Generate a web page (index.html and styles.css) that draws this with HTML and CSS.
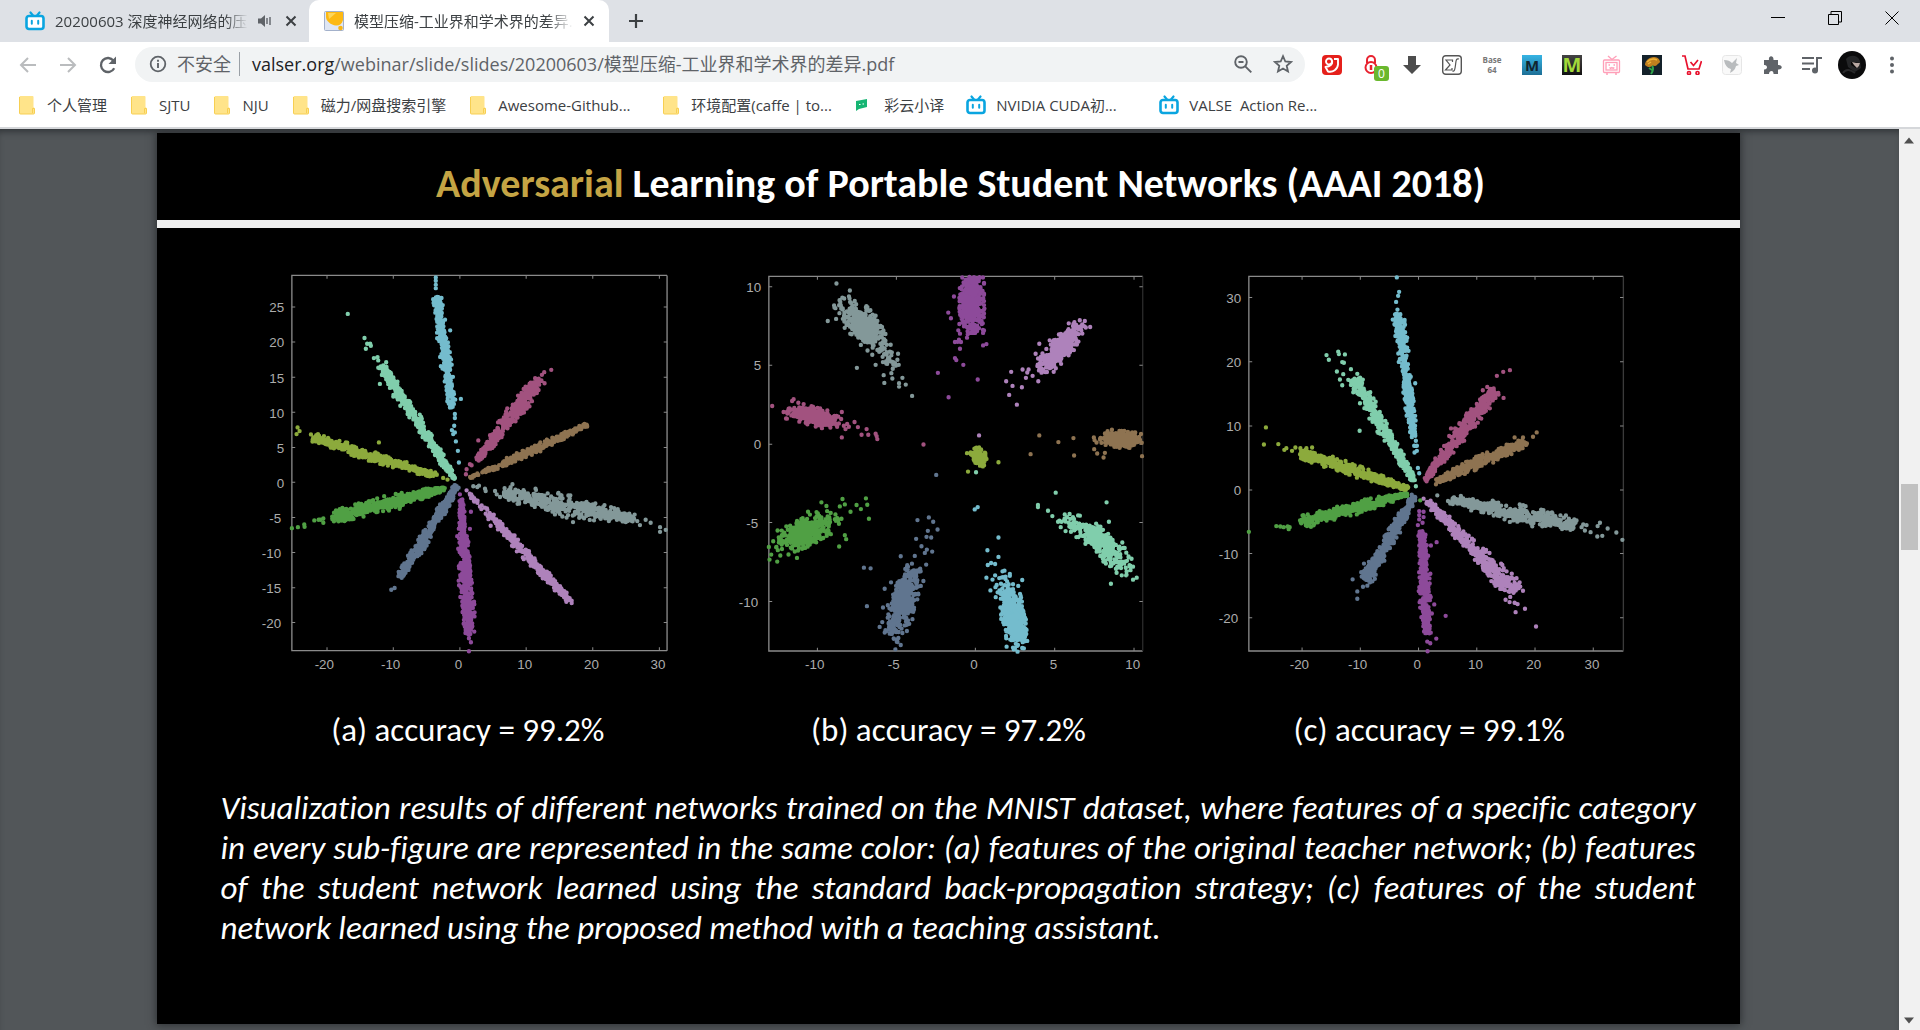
FILE: index.html
```html
<!DOCTYPE html>
<html lang="zh-CN">
<head>
<meta charset="utf-8">
<title>模型压缩-工业界和学术界的差异.pdf</title>
<link rel="stylesheet" href="styles.css">
</head>
<body>
<svg class="sprite" aria-hidden="true">
  <symbol id="tv" viewBox="0 0 20 20"><path d="M5.500 1.500 8 4.500M14.500 1.500 12 4.500" stroke="#0aa5e0" stroke-width="2.200" stroke-linecap="round"/><rect x="1.500" y="5" width="17" height="13" rx="2.500" fill="#fff" stroke="#0aa5e0" stroke-width="2.600"/><path d="M6.800 9.800v3M13.200 9.800v3" stroke="#0aa5e0" stroke-width="2" stroke-linecap="round"/></symbol>
  <symbol id="folder" viewBox="0 0 20 20"><path d="M3.500 1h12a1 1 0 0 1 1 1v10l1 1v5a1 1 0 0 1-1 1h-13a1 1 0 0 1-1-1V2a1 1 0 0 1 1-1z" fill="#ffe48a"/><path d="M2.500 2v16a1 1 0 0 0 1 1h13a1 1 0 0 0 1-1v-4.500h-2V18" fill="none" stroke="#f7cf52" stroke-width="1"/></symbol>
  <symbol id="close" viewBox="0 0 12 12"><path d="m1.500 1.500 9 9m0-9-9 9" stroke="#3c4043" stroke-width="2"/></symbol>
</svg>

<header class="browser">
  <div class="tabstrip">
    <div class="tab">
      <svg class="i20"><use href="#tv"/></svg>
      <span class="tab-title">20200603 深度神经网络的压</span>
      <svg class="sound" viewBox="0 0 14 14"><path d="M0 4.500h3L7 1v12L3 9.500H0z" fill="#5f6368"/><path d="M9 4v6M12 3v8" stroke="#5f6368" stroke-width="1.400"/></svg>
      <button class="tab-close" aria-label="关闭"><svg class="i12"><use href="#close"/></svg></button>
    </div>
    <div class="tab active">
      <svg class="i20" viewBox="0 0 20 20"><rect x=".5" y=".5" width="19" height="19" rx="1" fill="#dfe6f3" stroke="#a3b1cb"/><path d="M2 1h17v8c-1 4-4 6-7 5.500C7 14 2 10 2 6z" fill="#fdb913"/><path d="M4 2h8L5 8z" fill="#fed65a"/><circle cx="16.500" cy="17" r="2.300" fill="#f9b414"/></svg>
      <span class="tab-title">模型压缩-工业界和学术界的差异.</span>
      <button class="tab-close" aria-label="关闭"><svg class="i12"><use href="#close"/></svg></button>
    </div>
    <button class="new-tab" aria-label="新标签页"><svg class="i16" viewBox="0 0 16 16"><path d="M8 1v14M1 8h14" stroke="#3c4043" stroke-width="2.200"/></svg></button>
    <div class="window-buttons">
      <button aria-label="最小化"><svg class="i14" viewBox="0 0 14 14"><path d="M0 6.500h14" stroke="#000"/></svg></button>
      <button aria-label="还原"><svg class="i14" viewBox="0 0 14 14"><path d="M.5 3.500h10v10H.5zM3 3.500v-3h10.500v10.500h-3" fill="none" stroke="#000"/></svg></button>
      <button aria-label="关闭窗口"><svg class="i14" viewBox="0 0 14 14"><path d="m.5.5 13 13m0-13-13 13" stroke="#000"/></svg></button>
    </div>
  </div>

  <div class="toolbar">
    <button aria-label="后退"><svg class="i20" viewBox="0 0 20 20"><path d="M18 10H3m7-7-7 7 7 7" fill="none" stroke="#babcbe" stroke-width="2"/></svg></button>
    <button aria-label="前进"><svg class="i20" viewBox="0 0 20 20"><path d="M2 10h15m-7-7 7 7-7 7" fill="none" stroke="#babcbe" stroke-width="2"/></svg></button>
    <button aria-label="重新加载"><svg class="i20" viewBox="0 0 20 20"><path d="M16.200 13.200A7 7 0 1 1 15.500 5.700" fill="none" stroke="#5f6368" stroke-width="2.300"/><path d="M18 1.500V9h-7.500z" fill="#5f6368"/></svg></button>
    <div class="omnibox">
      <svg class="i18" viewBox="0 0 18 18"><circle cx="9" cy="9" r="7.300" fill="none" stroke="#5f6368" stroke-width="1.800"/><path d="M9 8v5M9 4.800v1.900" stroke="#5f6368" stroke-width="1.900"/></svg>
      <span class="insecure">不安全</span>
      <span class="url"><b>valser.org</b>/webinar/slide/slides/20200603/模型压缩-工业界和学术界的差异.pdf</span>
      <button aria-label="缩放"><svg class="i20" viewBox="0 0 20 20"><circle cx="8" cy="8" r="5.800" fill="none" stroke="#5f6368" stroke-width="1.900"/><path d="M5.500 8h5M12.300 12.300l6 6" stroke="#5f6368" stroke-width="1.900"/></svg></button>
      <button aria-label="收藏"><svg class="i20" viewBox="0 0 20 20"><path d="m10 2.200 2.300 5.300 5.700.5-4.300 3.800 1.300 5.700-5-3-5 3 1.300-5.700L2 8l5.700-.5z" fill="none" stroke="#5f6368" stroke-width="1.800"/></svg></button>
    </div>
    <div class="extensions">
      <button aria-label="扩展 1"><svg class="i20" viewBox="0 0 20 20"><rect width="20" height="20" rx="4" fill="#e5201b"/><g fill="none" stroke="#fff" stroke-width="1.900" stroke-linejoin="round"><circle cx="7" cy="6.500" r="3"/><path d="M10 5.500c1 4-2 6-6.500 6.500L6 16.500c5 1 9.500-2 10-7V4h-4"/></g></svg></button>
      <button class="badged" aria-label="扩展 2"><svg class="i20" viewBox="0 0 20 20"><path d="M5 8V5a4 4 0 0 1 8 0v3" fill="none" stroke="#e8222f" stroke-width="2"/><circle cx="9" cy="12.500" r="5.500" fill="none" stroke="#e8222f" stroke-width="2"/><path d="M9 10v5" stroke="#e8222f" stroke-width="2.500"/></svg><span class="badge">0</span></button>
      <button aria-label="下载"><svg class="i20" viewBox="0 0 20 20"><path d="M6 1h8v9h5l-9 9-9-9h5z" fill="#4d4d4d"/></svg></button>
      <button aria-label="公式"><svg class="i20" viewBox="0 0 20 20"><rect x=".7" y=".7" width="18.600" height="18.600" rx="3" fill="#fff" stroke="#555" stroke-width="1.400"/><path d="M10.500 7V5H4l4 5-4.500 5H10v-2M17 4c-3-1-3 2-3.500 6s-1 7-3 6" fill="none" stroke="#555" stroke-width="1.200"/></svg></button>
      <button class="base64" aria-label="Base64"><span>Base</span><span>64</span></button>
      <button class="tile blue" aria-label="扩展 M">M</button>
      <button class="tile lime" aria-label="扩展 Markdown">M</button>
      <button aria-label="哔哩哔哩"><svg class="i20" viewBox="0 0 20 20" fill="none" stroke="#ff9fb8" stroke-width="1.300"><path d="m6 1 4 3.500L14.500 1"/><rect x="1.500" y="5" width="16" height="12.500" rx="1"/><rect x="4" y="7.500" width="11" height="7.500"/><path d="M6.500 10h1.500M11.500 10H13M7.500 12.500l1.200 1 1.200-1 1.200 1 1.200-1M4 19h2M13 19h2"/></svg></button>
      <button aria-label="扩展 花"><svg class="i20" viewBox="0 0 20 20"><rect width="20" height="20" fill="#14212a"/><path d="M3 10c0-4 4-8 9-8 4 0 6 3 6 5-1 2-2 1-3 3-2 2-4 0-5 1-2 2-5 1-7-1z" fill="#c07f1e"/><path d="M5 7c3-3 6-4 10-2M6 9l3-2" stroke="#efb43a" stroke-width="1.500" fill="none"/><path d="M10 11c2 2 1 5-1 8M7 13l3 2" stroke="#2fa34a" stroke-width="2" fill="none"/></svg></button>
      <button aria-label="购物车"><svg class="i20" viewBox="0 0 20 20" fill="none" stroke="#e8112d" stroke-width="1.700"><path d="M0 1h3l3 13h11l2.500-8"/><path d="m8.500 7 3 3.500L16 5"/><circle cx="7" cy="18" r="1.500"/><circle cx="15.500" cy="18" r="1.500"/></svg></button>
      <button aria-label="扩展 鸟"><svg class="i20" viewBox="0 0 20 20"><rect x=".5" y=".5" width="19" height="19" rx="3" fill="#f9f9f9" stroke="#e6e6e6"/><path d="M2 5c4 0 6 1 8 3l5-5-1 5 3 2-3 1c-1 4-3 5-6 7l1-4c-4-1-6-4-7-9z" fill="#b9bcbe"/></svg></button>
      <button aria-label="扩展程序"><svg class="i20" viewBox="0 0 20 20"><path d="M2 5h5c-1-5 5-5 4.500 0H16v5c5-.5 5 5 0 4.500V19h-4.500c.5-4-4.500-4-4.500 0H2v-4.500c4 .5 4-5 0-4.500z" fill="#5f6368"/></svg></button>
      <button aria-label="媒体"><svg class="i20" viewBox="0 0 20 20"><path d="M0 3h12M0 8.500h12M0 14h8M15 16V3h5" stroke="#5f6368" stroke-width="2" fill="none"/><circle cx="13" cy="15.500" r="3" fill="#5f6368"/></svg></button>
      <button aria-label="个人资料"><svg class="avatar" viewBox="0 0 28 28"><circle cx="14" cy="14" r="14" fill="#0b0b0c"/><path d="M8 8c4-5 12-4 14 2l1 7-6 4-7-5z" fill="#242527"/><path d="m13 11 9 1-1 4-3 1-5-3z" fill="#080808"/><path d="m14 11 4 1 4 0-1 3-2 2-3-3z" fill="#b9a9a3"/><path d="M5 22c3-5 8-3 12 0" stroke="#29292b" stroke-width="2" fill="none"/></svg></button>
      <button aria-label="菜单"><svg class="i20" viewBox="0 0 20 20" fill="#5f6368"><circle cx="10" cy="3.500" r="2"/><circle cx="10" cy="10" r="2"/><circle cx="10" cy="16.500" r="2"/></svg></button>
    </div>
  </div>

  <nav class="bookmarks">
    <a href="#"><svg class="i20"><use href="#folder"/></svg>个人管理</a>
    <a href="#"><svg class="i20"><use href="#folder"/></svg>SJTU</a>
    <a href="#"><svg class="i20"><use href="#folder"/></svg>NJU</a>
    <a href="#"><svg class="i20"><use href="#folder"/></svg>磁力/网盘搜索引擎</a>
    <a href="#" class="long"><svg class="i20"><use href="#folder"/></svg>Awesome-Github...</a>
    <a href="#" class="long"><svg class="i20"><use href="#folder"/></svg>环境配置(caffe | to...</a>
    <a href="#"><svg class="i20" viewBox="0 0 20 20"><path d="m2 6 11-2v8l-8 2-3 2z" fill="#16b573"/><path d="M5 9.500h1.500M8.500 9H10" stroke="#fff" stroke-width="1.200"/></svg>彩云小译</a>
    <a href="#" class="long"><svg class="i20"><use href="#tv"/></svg>NVIDIA CUDA初...</a>
    <a href="#" class="long"><svg class="i20"><use href="#tv"/></svg>VALSE &nbsp;Action Re...</a>
  </nav>
</header>

<div class="viewer">
  <div class="canvas">
    <main class="slide">
      <h1><em>Adversarial</em> Learning of Portable Student Networks (AAAI 2018)</h1>
      <div class="figures">
        <figure><svg class="plot" id="plot-a" viewBox="9 0 1350 1320"></svg><figcaption>(a) accuracy = 99.2%</figcaption></figure>
        <figure><svg class="plot" id="plot-b" viewBox="9 0 1350 1320"></svg><figcaption>(b) accuracy = 97.2%</figcaption></figure>
        <figure><svg class="plot" id="plot-c" viewBox="9 0 1350 1320"></svg><figcaption>(c) accuracy = 99.1%</figcaption></figure>
      </div>
      <p class="note">Visualization results of different networks trained on the MNIST dataset, where features of a specific category in every sub-figure are represented in the same color: (a) features of the original teacher network; (b) features of the student network learned using the standard back-propagation strategy; (c) features of the student network learned using the proposed method with a teaching assistant.</p>
    </main>
  </div>
  <div class="scrollbar">
    <svg class="arrow" viewBox="0 0 20 20"><path d="M5 14.500h10l-5-6z" fill="#505050"/></svg>
    <div class="track"><div class="thumb"></div></div>
    <svg class="arrow" viewBox="0 0 20 20"><path d="M5 7.500h10l-5 6z" fill="#505050"/></svg>
  </div>
</div>
<script src="plots.js"></script>
</body>
</html>
```
FILE: styles.css
```css
* { box-sizing: border-box; }
body {
  margin: 0;
  height: 100vh;
  display: flex;
  flex-direction: column;
  overflow: hidden;
  font: 15px/20px "Open Sans", "Noto Sans CJK SC", sans-serif;
  color: #3c4043;
  background: #fff;
}
button { border: 0; padding: 0; background: none; color: inherit; font: inherit; display: flex; align-items: center; justify-content: center; }
svg { flex: none; display: block; }
.sprite { width: 0; height: 0; position: absolute; }
.i12 { width: 12px; height: 12px; }
.i14 { width: 14px; height: 14px; }
.i16 { width: 16px; height: 16px; }
.i18 { width: 18px; height: 18px; }
.i20 { width: 20px; height: 20px; }

/* tab strip */
.browser { flex: none; border-bottom: 2px solid #d5d7da; }
.tabstrip { height: 42px; display: flex; background: #dee1e6; }
.tab { width: 309px; padding: 0 12px 0 25px; display: flex; align-items: center; gap: 10px; }
.tab.active { width: 300px; padding: 0 14px 0 15px; background: #fff; border-radius: 10px 10px 0 0; }
.tab-title {
  flex: 1;
  overflow: hidden;
  white-space: nowrap;
  -webkit-mask-image: linear-gradient(to right, #000 88%, transparent);
  mask-image: linear-gradient(to right, #000 88%, transparent);
}
.sound { width: 14px; height: 14px; }
.tab-close { width: 12px; margin-left: 3px; }
.active .tab-close { margin-left: 0; }
.new-tab { width: 54px; }
.window-buttons { margin-left: auto; display: flex; padding-bottom: 6px; }
.window-buttons button { width: 57px; }

/* toolbar */
.toolbar { height: 45px; padding: 0 8px; display: flex; align-items: center; }
.toolbar > button { width: 40px; height: 35px; }
.omnibox { flex: 1; height: 35px; margin-left: 7px; padding: 0 12px 2px 14px; display: flex; align-items: center; background: #f1f3f4; border-radius: 18px; color: #5f6368; font-size: 18px; line-height: 24px; }
.insecure { margin-left: 10px; padding-right: 8px; border-right: 1px solid #9aa0a6; }
.url { flex: 1; margin-left: 12px; white-space: nowrap; }
.url b { font-weight: 400; color: #202124; }
.omnibox button { width: 20px; margin-left: 20px; }
.extensions { display: flex; align-items: center; margin-left: 7px; }
.extensions button { width: 40px; height: 35px; }
.badged { position: relative; }
.badge { position: absolute; right: 3px; bottom: 1px; width: 15px; height: 15px; border-radius: 3px; background: #6ab82e; color: #fff; font-size: 12px; line-height: 15px; }
.extensions .base64 { flex-direction: column; font: 700 8px/10px "Open Sans", sans-serif; color: #777; }
.extensions .tile { width: 20px; height: 20px; margin: 0 10px; font: 700 15px/20px "Open Sans", sans-serif; }
.blue { background: linear-gradient(#36b4e4, #1d6f96); color: #10242e; }
.extensions .lime { font-size: 20px; background: linear-gradient(#444, #111); color: #a2d93a; }
.avatar { width: 28px; height: 28px; }

/* bookmarks */
.bookmarks { height: 40px; padding: 0 17px 5px; display: flex; align-items: center; gap: 22px; white-space: nowrap; }
.bookmarks a { display: flex; align-items: center; gap: 10px; color: inherit; text-decoration: none; }
.bookmarks .long { width: 171px; }

/* document viewer */
.viewer { flex: 1; min-height: 0; display: flex; background: #525659; }
.canvas { flex: 1; overflow: hidden; padding: 4px 2px 0 0; box-shadow: inset 0 6px 6px -3px #33373a; }
.slide {
  width: 83.4%;
  aspect-ratio: 1581 / 890;
  margin: 0 auto;
  background: #000;
  color: #fff;
  box-shadow: 0 0 8px 1px #2d3033;
  font: 33px/40px Carlito, Calibri, Lato, sans-serif;
  font-variant-ligatures: none;
}
.slide h1 {
  margin: 0;
  padding: 31px 0 16px 24px;
  border-bottom: 8px solid #f0f0f0;
  text-align: center;
  font-size: 40px;
  line-height: 40px;
}
.slide em { font-style: normal; color: #c4a444; }
.figures { display: grid; grid-template-columns: repeat(3, 1fr); padding: 22px 70px 0; }
figure { margin: 0; display: flex; flex-direction: column; align-items: center; gap: 18px; }
.plot { width: 94%; }
.plot text { font: 40px "Liberation Sans", sans-serif; fill: #acacac; }
.note { margin: 0; padding: 38px 44px 0 63px; text-align: justify; font-style: italic; }

/* scrollbar */
.scrollbar { width: 21px; display: flex; flex-direction: column; background: #f1f1f1; }
.arrow { width: 20px; height: 20px; }
.track { flex: 1; padding: 0 2px; display: flex; flex-direction: column; }
.track::before { content: ""; flex: 335; }
.track::after { content: ""; flex: 460; }
.thumb { flex: 66; background: #c1c1c1; }
```
FILE: plots.js
```js
// Scatter plots of the learned features, one colour per digit class.
const COLORS = {
  cyan: '#74bccd', mint: '#80ceac', pink: '#a2527f', brown: '#8e7351', grey: '#839899',
  lilac: '#ae82bb', purple: '#8d4a9a', slate: '#60758f', green: '#50a044', olive: '#8caa3c'
};

let seed = 7;
function rand() {
  seed = (seed * 1664525 + 1013904223) % 4294967296;
  return seed / 4294967296;
}
function gauss() {
  const g = Math.sqrt(-2 * Math.log(1 - rand())) * Math.cos(2 * Math.PI * rand());
  return Math.max(-2.3, Math.min(2.3, g));
}

// A ray of points from one end to the other; w holds its half widths at start, middle, end.
function streak(color, [x0, y0, x1, y1], w, n, extra) {
  const len = Math.hypot(x1 - x0, y1 - y0), pts = [];
  for (let i = 0; i < n; i++) {
    const t = rand();
    const half = t < .5 ? w[0] + (w[1] - w[0]) * t * 2 : w[1] + (w[2] - w[1]) * (t - .5) * 2;
    const o = gauss() * half * .45;
    pts.push([x0 + (x1 - x0) * t - (y1 - y0) / len * o, y0 + (y1 - y0) * t + (x1 - x0) / len * o]);
  }
  return { color, pts, extra };
}
// An elliptic cloud around a centre, stretched along the direction (dx, dy).
function cloud(color, [cx, cy, dx, dy], [long, short], n, extra) {
  const len = Math.hypot(dx, dy), pts = [];
  for (let i = 0; i < n; i++) {
    const a = gauss() * long, b = gauss() * short;
    pts.push([cx + (dx * a - dy * b) / len, cy + (dy * a + dx * b) / len]);
  }
  return { color, pts, extra };
}

function draw(id, box, xticks, yticks, clusters, rightEdge) {
  const [l, t, r, b] = box;
  let s = `<path d="M${r} ${t}H${l}V${b}H${r}" fill="none" stroke="#8a8a8a" stroke-width="4"/>`;
  s += `<path d="M${r} ${t}V${b}" stroke="${rightEdge}" stroke-width="4"/>`;
  let d = '';
  for (const [x, label] of xticks) {
    d += `M${x} ${b}v-10M${x} ${t}v10`;
    s += `<text x="${x - (label < 0 ? 8 : 4)}" y="1253" text-anchor="middle">${label}</text>`;
  }
  for (const [y, label] of yticks) {
    d += `M${l} ${y}h10M${r} ${y}h-10`;
    s += `<text x="${l - (label < 0 ? 32 : 23)}" y="${y + 16}" text-anchor="end">${label}</text>`;
  }
  s += `<path d="${d}" stroke="#8a8a8a" stroke-width="3"/>`;
  for (const c of clusters) {
    let p = '';
    for (const [x, y] of c.pts) {
      if (x >= l && x <= r && y >= t && y <= b) p += `M${x.toFixed(1)} ${y.toFixed(1)}h0`;
    }
    for (let i = 0; i < c.extra.length; i += 2) p += `M${c.extra[i]} ${c.extra[i + 1]}h0`;
    s += `<path d="${p}" stroke="${COLORS[c.color]}" stroke-width="13" stroke-linecap="round"/>`;
  }
  document.getElementById(id).innerHTML = s;
}

draw('plot-a', [158, 76, 1279, 1197],
  [[263, -20], [461, -10], [660, 0], [858, 10], [1057, 20], [1256, 30]],
  [[170, 25], [275, 20], [380, 15], [485, 10], [590, 5], [694, 0], [799, -5], [904, -10], [1009, -15], [1113, -20]],
  [
    streak('cyan', [636, 470, 592, 140], [12, 17, 12], 330, [588,82,588,92,588,104,588,114,645,490,645,502,643,525,636,538,645,545,640,550,648,572,654,600,657,635,631,240,663,445]),
    streak('mint', [645, 685, 425, 345], [9, 17, 17], 380, [325,191,375,263,383,280,379,295,392,280,394,286,403,323,414,320,416,330,421,400,461,438]),
    streak('pink', [712, 628, 900, 385], [6, 24, 18], 420, [933,358,912,365,905,373,715,569,680,655,690,640,695,643,678,670,890,390,913,398,868,467]),
    streak('brown', [780, 643, 1040, 522], [10, 13, 5], 260, []),
    streak('brown', [684, 682, 780, 643], [3, 5, 9], 40, []),
    streak('grey', [790, 725, 1180, 805], [20, 34, 14], 430, [817,700,700,706,717,704,712,708,735,713,737,720,765,720,770,730,780,738,1190,810,1198,822,1215,806,1230,815,1258,828,1258,842,1275,836,998,813,990,733,886,713]),
    streak('lilac', [745, 788, 985, 1045], [10, 15, 9], 300, [680,718,994,1055,994,1048,752,824]),
    streak('lilac', [685, 724, 745, 788], [6, 9, 9], 24, []),
    streak('purple', [664, 745, 688, 1150], [6, 22, 18], 420, [660,730,693,782,690,833,652,855,693,1172,685,1148,687,1160,703,1140,657,945,687,1199]),
    streak('slate', [650, 705, 482, 980], [9, 17, 13], 380, [455,1015,465,1010,478,965]),
    streak('green', [615, 712, 275, 800], [8, 22, 18], 440, [158,831,176,828,195,820,196,827,225,808,238,806,243,806,252,815,252,802,480,773]),
    streak('olive', [590, 675, 220, 560], [8, 16, 14], 360, [175,530,181,541,172,550,215,551,236,550,418,575,610,681,623,686])
  ], '#8a8a8a');

draw('plot-b', [146, 79, 1263, 1198],
  [[291, -10], [527, -5], [763, 0], [1000, 5], [1237, 10]],
  [[110, 10], [344, 5], [580, 0], [814, -5], [1050, -10]],
  [
    cloud('grey', [424, 220, 1, 1.05], [42, 20], 360, [348,100,322,212,342,172,356,165,371,145,387,145,409,352,465,343,510,283,532,310,530,328,534,343,489,374,515,384,491,397,512,368,545,382,535,398,535,408,555,402,574,436,455,313]),
    cloud('grey', [500, 322, 1, 1.3], [18, 9], 30, []),
    cloud('purple', [752, 165, 0, 1], [36, 16], 440, [730,98,718,133,699,139,682,187,690,204,712,240,702,275,714,268,710,274,720,275,738,262,740,252,717,250,717,295,702,323,706,329,727,343,651,367,683,440,770,387,786,285,796,281,790,175]),
    cloud('purple', [753, 100, 0, 1], [18, 11], 80, []),
    cloud('lilac', [1020, 293, 1, -1.15], [41, 14], 340, [1075,210,1090,212,1106,230,1042,219,954,280,943,310,870,364,855,392,874,406,902,410,864,433,887,462,904,357,922,357,918,366,914,382,934,376,951,392,997,364,774,554,985,270,960,325]),
    cloud('pink', [280, 497, 1, .27], [34, 12], 300, [156,466,220,446,190,484,200,484,364,484,402,514,412,529,438,535,423,552,443,552,465,549,468,556,470,565,364,560,608,581,380,520,375,535,385,528,362,505,350,528,370,525]),
    cloud('green', [258, 842, 1, -.5], [44, 18], 400, [303,754,318,765,320,780,366,744,373,760,358,766,390,782,421,774,408,762,436,742,440,761,445,803,373,852,377,864,356,886,146,887,153,910,148,925,171,931,172,838,230,920,263,782,363,803,345,790]),
    cloud('slate', [548, 1045, -.33, 1], [48, 17], 350, [646,672,624,799,590,807,637,812,650,835,621,839,586,863,617,857,631,859,602,885,618,895,612,905,634,901,616,940,582,914,540,915,430,949,450,951,439,1064,487,1068,477,1126,540,1180,524,1193,492,1012,511,993,575,1103,558,1120]),
    cloud('slate', [520, 1130, 0, 1], [18, 12], 34, []),
    cloud('cyan', [872, 1085, .22, 1], [48, 16], 360, [761,775,770,768,832,859,799,897,832,917,800,941,810,935,822,938,796,979,822,972,808,1017,903,986,889,1200,908,1190,918,1168,850,958,844,960,866,968]),
    cloud('cyan', [882, 1130, .2, 1], [22, 14], 110, []),
    cloud('mint', [1145, 882, 1, .85], [48, 16], 330, [1003,725,1155,754,1162,812,950,762,950,768,980,779,993,795,1030,790,1070,793,1202,874,1205,890,1168,997,1234,985,1245,979,1234,946,1010,812,1018,828,1113,828,1130,826,765,664]),
    cloud('mint', [1045, 815, 1, .6], [18, 12], 28, []),
    cloud('brown', [1200, 566, 1, 0], [28, 11], 300, [954,554,1011,574,1056,562,928,610,1058,614,1118,595,1127,608,1146,620,1150,606,1117,560,1119,568,1125,575,1171,537,1261,616,1260,576]),
    cloud('olive', [773, 620, 1, 1], [12, 10], 160, [738,607,741,662,832,634,768,592])
  ], '#2b2b2b');

draw('plot-c', [146, 79, 1265, 1198],
  [[305, -20], [479, -10], [653, 0], [827, 10], [1001, 20], [1175, 30]],
  [[142, 30], [334, 20], [526, 10], [717, 0], [907, -10], [1099, -20]],
  [
    streak('cyan', [638, 560, 592, 190], [11, 15, 19], 370, [588,82,595,125,592,137,586,155,590,178,643,398,645,570,640,585,648,585,648,600,641,605,651,651,655,667]),
    streak('mint', [640, 690, 460, 385], [7, 19, 22], 380, [378,314,385,328,413,304,415,311,433,312,425,335,430,337,409,363,428,371,418,387,425,404,451,356,470,370,443,388,477,540,504,426,645,706]),
    streak('pink', [672, 688, 880, 415], [6, 24, 20], 420, [887,376,906,364,926,359,892,432,907,442,845,419,866,473,703,623,750,533]),
    streak('brown', [705, 690, 975, 572], [10, 18, 15], 340, [1006,545,995,558,940,560,705,700]),
    streak('grey', [750, 745, 1120, 825], [14, 28, 24], 420, [709,733,741,750,1145,820,1155,822,1140,828,1150,838,1167,843,1187,856,1202,854,1195,815,1188,825,1218,832,1244,844,1262,866,1125,808]),
    streak('lilac', [680, 750, 945, 1025], [9, 22, 32], 420, [668,743,955,993,965,1018,913,1045,925,1052,940,1054,949,1058,943,1082,971,1072,1004,1125,930,980]),
    streak('purple', [662, 840, 680, 1150], [10, 20, 13], 360, [655,780,668,782,655,792,668,798,655,805,651,822,665,815,690,883,707,873,700,1059,734,1093,706,1161,679,1170,688,1175,680,1199]),
    streak('slate', [640, 735, 495, 985], [8, 20, 22], 380, [456,984,470,1020,470,1042,487,1006,500,1003,508,993,525,970,490,937]),
    streak('green', [620, 728, 300, 815], [8, 20, 19], 420, [146,842,228,825,240,826,250,828,262,826,268,828,265,834,658,748]),
    streak('olive', [622, 713, 300, 605], [6, 18, 19], 400, [197,530,191,581,234,580,252,597,258,592,275,600,285,590,300,592,335,590,318,592])
  ], '#3a3a3a');
```
